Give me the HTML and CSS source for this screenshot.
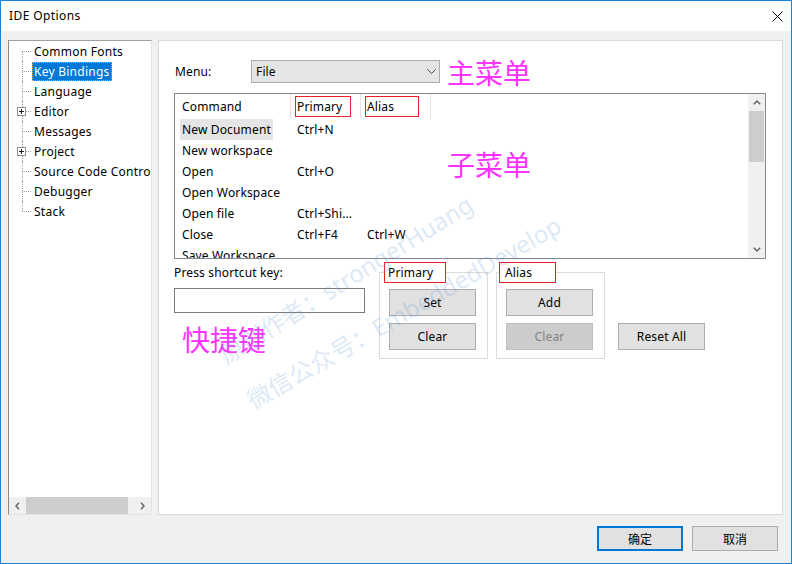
FILE: index.html
```html
<!DOCTYPE html>
<html>
<head>
<meta charset="utf-8">
<link rel="stylesheet" href="styles.css">
</head>
<body>
<div class="window">
  <div class="titlebar">
    <span class="title">IDE Options</span>
    <svg class="close" width="11" height="11" viewBox="0 0 11 11"><path d="M0.5 0.5L10.5 10.5M10.5 0.5L0.5 10.5" stroke="#000" stroke-width="1"/></svg>
  </div>
  <div class="client">
    <div class="panes">
      <div class="tree">
        <ul class="tree-list">
          <li class="node"><span class="branch"></span><span class="label">Common Fonts</span></li>
          <li class="node selected"><span class="branch"></span><span class="label">Key Bindings</span></li>
          <li class="node"><span class="branch"></span><span class="label">Language</span></li>
          <li class="node"><span class="branch"><svg class="plus" width="9" height="9" viewBox="0 0 9 9"><rect x="0.5" y="0.5" width="8" height="8" fill="#fff" stroke="#919191"/><path d="M2 4.5h5M4.5 2v5" stroke="#222"/></svg></span><span class="label">Editor</span></li>
          <li class="node"><span class="branch"></span><span class="label">Messages</span></li>
          <li class="node"><span class="branch"><svg class="plus" width="9" height="9" viewBox="0 0 9 9"><rect x="0.5" y="0.5" width="8" height="8" fill="#fff" stroke="#919191"/><path d="M2 4.5h5M4.5 2v5" stroke="#222"/></svg></span><span class="label">Project</span></li>
          <li class="node"><span class="branch"></span><span class="label">Source Code Control</span></li>
          <li class="node"><span class="branch"></span><span class="label">Debugger</span></li>
          <li class="node"><span class="branch"></span><span class="label">Stack</span></li>
        </ul>
        <div class="hscroll">
          <span class="sb-btn"><svg width="5" height="8" viewBox="0 0 5 8"><path d="M4 0.8L1 4L4 7.2" fill="none" stroke="#606060" stroke-width="1.4"/></svg></span>
          <span class="hthumb"></span>
          <span class="sb-track"></span>
          <span class="sb-btn"><svg width="5" height="8" viewBox="0 0 5 8"><path d="M1 0.8L4 4L1 7.2" fill="none" stroke="#606060" stroke-width="1.4"/></svg></span>
        </div>
      </div>
      <div class="page">
        <div class="menu-row">
          <span class="menu-label">Menu:</span>
          <div class="combo"><span>File</span><svg width="9" height="5" viewBox="0 0 9 5"><path d="M0.5 0.5L4.5 4.5L8.5 0.5" fill="none" stroke="#444" stroke-width="1"/></svg></div>
          <span class="note">主菜单</span>
        </div>
        <div class="list">
          <div class="list-body">
            <div class="lrow lhead">
              <div class="c-cmd"><span class="cmd">Command</span></div>
              <div class="c-pri"><span class="hbox hbox-pri">Primary</span></div>
              <div class="c-ali"><span class="hbox hbox-ali">Alias</span></div>
            </div>
            <div class="lrow"><div class="c-cmd"><span class="cmd cur">New Document</span></div><div class="c-pri">Ctrl+N</div><div class="c-ali"></div></div>
            <div class="lrow"><div class="c-cmd"><span class="cmd">New workspace</span></div><div class="c-pri"></div><div class="c-ali"></div></div>
            <div class="lrow"><div class="c-cmd"><span class="cmd">Open</span></div><div class="c-pri">Ctrl+O</div><div class="c-ali"></div></div>
            <div class="lrow"><div class="c-cmd"><span class="cmd">Open Workspace</span></div><div class="c-pri"></div><div class="c-ali"></div></div>
            <div class="lrow"><div class="c-cmd"><span class="cmd">Open file</span></div><div class="c-pri">Ctrl+Shi...</div><div class="c-ali"></div></div>
            <div class="lrow"><div class="c-cmd"><span class="cmd">Close</span></div><div class="c-pri">Ctrl+F4</div><div class="c-ali">Ctrl+W</div></div>
            <div class="lrow"><div class="c-cmd"><span class="cmd">Save Workspace</span></div><div class="c-pri"></div><div class="c-ali"></div></div>
          </div>
          <div class="vscroll">
            <span class="sb-btn"><svg width="8" height="5" viewBox="0 0 8 5"><path d="M0.8 4.2L4 1L7.2 4.2" fill="none" stroke="#606060" stroke-width="1.4"/></svg></span>
            <span class="vthumb"></span>
            <span class="sb-track"></span>
            <span class="sb-btn"><svg width="8" height="5" viewBox="0 0 8 5"><path d="M0.8 0.8L4 4L7.2 0.8" fill="none" stroke="#606060" stroke-width="1.4"/></svg></span>
          </div>
          <span class="note note-sub">子菜单</span>
        </div>
        <div class="keys">
          <div class="key-col">
            <div class="key-label">Press shortcut key:</div>
            <div class="key-input"></div>
            <div class="note note-key">快捷键</div>
          </div>
          <fieldset class="group group-pri">
            <legend>Primary</legend>
            <button class="btn">Set</button>
            <button class="btn">Clear</button>
          </fieldset>
          <fieldset class="group group-ali">
            <legend>Alias</legend>
            <button class="btn">Add</button>
            <button class="btn" disabled>Clear</button>
          </fieldset>
          <button class="btn reset">Reset All</button>
        </div>
      </div>
    </div>
    <div class="footer">
      <button class="btn fbtn btn-default">确定</button>
      <button class="btn fbtn">取消</button>
    </div>
  </div>
  <div class="watermark wm1">原创作者：strongerHuang</div>
  <div class="watermark wm2">微信公众号：EmbeddedDevelop</div>
</div>
</body>
</html>
```

FILE: styles.css
```css
* { box-sizing: border-box; }
html, body { margin: 0; padding: 0; }
body {
  width: 792px;
  height: 564px;
  overflow: hidden;
  font-family: "Noto Sans", "Noto Sans CJK SC", sans-serif;
  font-size: 12px;
  line-height: 1.3;
  letter-spacing: 0.15px;
  color: #000;
}
.window {
  position: relative;
  width: 792px;
  height: 564px;
  border: 1px solid #1883d7;
  background: #f0f0f0;
  display: flex;
  flex-direction: column;
  overflow: hidden;
}
.titlebar {
  flex: none;
  height: 30px;
  background: #fff;
  display: flex;
  align-items: center;
  justify-content: space-between;
  padding: 0 8px 0 8px;
}
.title { font-size: 12px; line-height: 16px; letter-spacing: 0.4px; }
.close { display: block; }

.client {
  flex: 1;
  display: flex;
  flex-direction: column;
  padding: 9px 8px 0 7px;
}
.panes {
  display: flex;
  gap: 6px;
  height: 475px;
}

/* tree */
.tree {
  flex: none;
  width: 144px;
  display: flex;
  flex-direction: column;
  background: #fff;
  border-left: 1px solid #828790;
  border-top: 1px solid #a0a0a0;
  border-right: 1px solid #e3e3e3;
  border-bottom: 1px solid #e3e3e3;
}
.tree-list {
  list-style: none;
  margin: 0;
  padding: 0;
  flex: 1;
  overflow: hidden;
}
.node {
  display: flex;
  align-items: center;
  height: 20px;
  white-space: nowrap;
}
.branch {
  position: relative;
  flex: none;
  width: 23px;
  height: 20px;
}
.branch::before {
  content: "";
  position: absolute;
  left: 13px;
  top: 0;
  bottom: 0;
  border-left: 1px dotted #a0a0a0;
}
.node:first-child .branch::before { top: 10px; }
.node:last-child .branch::before { bottom: 10px; }
.branch::after {
  content: "";
  position: absolute;
  left: 13px;
  top: 10px;
  width: 9px;
  border-top: 1px dotted #a0a0a0;
}
.plus {
  position: absolute;
  left: 8px;
  top: 6px;
  z-index: 1;
  display: block;
}
.label {
  padding: 0 1px;
  border: 1px solid transparent;
  line-height: 17px;
  letter-spacing: 0.25px;
}
.node.selected .label {
  background: #0078d7;
  color: #fff;
  border: 1px dotted #e8a33a;
}
.hscroll {
  flex: none;
  height: 17px;
  display: flex;
  background: #f0f0f0;
}
.sb-btn {
  flex: none;
  width: 17px;
  height: 17px;
  display: flex;
  align-items: center;
  justify-content: center;
}
.sb-btn svg { display: block; }
.hthumb { flex: none; width: 102px; background: #cdcdcd; }
.sb-track { flex: 1; }

/* page */
.page {
  flex: 1;
  position: relative;
  background: #fff;
  border: 1px solid #d9d9d9;
  padding: 19px 0 0 15px;
}
.menu-row {
  display: flex;
  align-items: center;
  height: 23px;
}
.menu-label { width: 77px; padding-left: 1px; }
.combo {
  width: 189px;
  height: 23px;
  background: #e5e5e5;
  border: 1px solid #adadad;
  display: flex;
  align-items: center;
  justify-content: space-between;
  padding: 0 3px 0 4px;
}
.combo svg { display: block; }
.note {
  color: #ff33ff;
  font-family: "Noto Sans CJK SC", sans-serif;
  font-size: 28px;
  line-height: 32px;
  letter-spacing: 0;
  white-space: nowrap;
}
.menu-row .note { margin-left: 7px; }

.list {
  position: relative;
  margin-top: 10px;
  width: 592px;
  height: 166px;
  border: 1px solid #828790;
  display: flex;
}
.list-body { flex: 1; overflow: hidden; }
.lrow {
  display: flex;
  height: 21px;
  line-height: 21px;
  white-space: nowrap;
}
.lhead { height: 25px; line-height: 25px; }
.c-cmd { flex: none; width: 116px; padding-left: 5px; }
.c-pri { flex: none; width: 70px; padding-left: 6px; }
.c-ali { flex: none; width: 70px; padding-left: 6px; }
.lhead .c-cmd, .lhead .c-pri, .lhead .c-ali { border-right: 1px solid #e5e5e5; }
.lhead .c-pri, .lhead .c-ali { padding-left: 4px; }
.cmd { display: inline-block; padding: 0 2px; }
.cmd.cur { background: #e5e5e5; }
.hbox {
  display: inline-block;
  vertical-align: top;
  margin-top: 2px;
  height: 21px;
  line-height: 19px;
  border: 1px solid #e8202a;
  padding-left: 1px;
}
.hbox-pri { width: 56px; }
.hbox-ali { width: 54px; }
.vscroll {
  flex: none;
  width: 17px;
  background: #f0f0f0;
  display: flex;
  flex-direction: column;
}
.vthumb { flex: none; height: 51px; margin: 0 1px; background: #cdcdcd; }
.note-sub { position: absolute; left: 272px; top: 54px; }

.keys { display: flex; align-items: flex-start; }
.key-col {
  flex: none;
  width: 191px;
  display: flex;
  flex-direction: column;
  align-items: flex-start;
}
.key-label { margin-top: 3px; line-height: 21px; }
.key-input {
  margin-top: 5px;
  width: 191px;
  height: 25px;
  border: 1px solid #7a7a7a;
  background: #fff;
}
.note-key { margin-top: 10px; margin-left: 8px; }
.group {
  flex: none;
  margin: 3px 0 0 14px;
  width: 109px;
  min-width: 0;
  border: 1px solid #dcdcdc;
  padding: 6px 0 8px 4px;
}
.group legend {
  margin: 0;
  width: 62px;
  height: 21px;
  line-height: 19px;
  padding: 0 0 0 3px;
  border: 1px solid #e8202a;
}
.group-ali { margin-left: 8px; padding-left: 2px; }
.group-ali legend { width: 57px; padding-left: 5px; }
.btn {
  display: block;
  margin: 0;
  padding: 0;
  width: 87px;
  height: 27px;
  font-family: "Noto Sans", "Noto Sans CJK SC", sans-serif;
  font-size: 12px;
  line-height: 25px;
  letter-spacing: 0.15px;
  color: #000;
  background: #e1e1e1;
  border: 1px solid #adadad;
}
.group .btn { margin-left: 5px; }
.group-ali .btn { margin-left: 7px; }
.group .btn + .btn { margin-top: 7px; }
.btn:disabled { background: #cccccc; border-color: #bfbfbf; color: #838383; }
.reset { flex: none; margin: 64px 0 0 13px; }

.footer {
  display: flex;
  justify-content: flex-end;
  gap: 9px;
  margin-top: 11px;
  padding-right: 5px;
}
.fbtn {
  width: 86px;
  height: 25px;
  line-height: 23px;
  font-family: "Noto Sans CJK SC", sans-serif;
  letter-spacing: 0;
}
.btn-default { border: 2px solid #0078d7; line-height: 21px; }

.watermark {
  position: absolute;
  white-space: nowrap;
  font-family: "Noto Sans", "Noto Sans CJK SC", sans-serif;
  font-size: 24px;
  line-height: 30px;
  letter-spacing: 0;
  color: rgba(90, 150, 215, 0.22);
  transform-origin: 0 50%;
  pointer-events: none;
}
.wm1 { left: 221px; top: 341px; transform: rotate(-32deg); }
.wm2 { left: 248px; top: 386px; transform: rotate(-30deg); }
```
